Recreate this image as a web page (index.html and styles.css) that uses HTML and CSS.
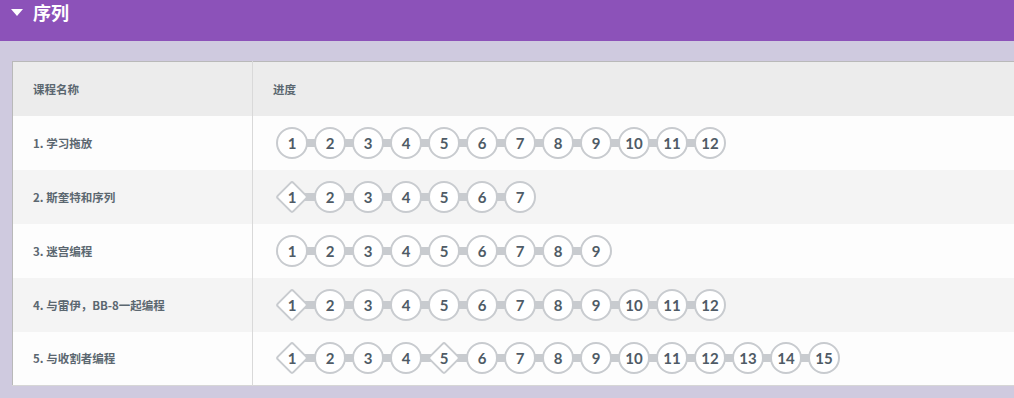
FILE: index.html
```html
<!DOCTYPE html>
<html lang="zh">
<head>
  <meta charset="UTF-8">
  <title>序列</title>
  <link rel="stylesheet" href="styles.css">
</head>
<body>
  <div class="header">
    <span class="caret"></span>
    <h1>序列</h1>
  </div>

  <div class="content">
    <table class="progress">
      <thead>
        <tr>
          <th class="name">课程名称</th>
          <th>进度</th>
        </tr>
      </thead>
      <tbody>
        <tr>
          <td class="name">1. 学习拖放</td>
          <td>
            <div class="steps">
              <span class="step">1</span><span class="step">2</span><span class="step">3</span><span class="step">4</span><span class="step">5</span><span class="step">6</span><span class="step">7</span><span class="step">8</span><span class="step">9</span><span class="step">10</span><span class="step">11</span><span class="step">12</span>
            </div>
          </td>
        </tr>
        <tr>
          <td class="name">2. 斯奎特和序列</td>
          <td>
            <div class="steps">
              <span class="step diamond">1</span><span class="step">2</span><span class="step">3</span><span class="step">4</span><span class="step">5</span><span class="step">6</span><span class="step">7</span>
            </div>
          </td>
        </tr>
        <tr>
          <td class="name">3. 迷宫编程</td>
          <td>
            <div class="steps">
              <span class="step">1</span><span class="step">2</span><span class="step">3</span><span class="step">4</span><span class="step">5</span><span class="step">6</span><span class="step">7</span><span class="step">8</span><span class="step">9</span>
            </div>
          </td>
        </tr>
        <tr>
          <td class="name">4. 与雷伊，BB-8一起编程</td>
          <td>
            <div class="steps">
              <span class="step diamond">1</span><span class="step">2</span><span class="step">3</span><span class="step">4</span><span class="step">5</span><span class="step">6</span><span class="step">7</span><span class="step">8</span><span class="step">9</span><span class="step">10</span><span class="step">11</span><span class="step">12</span>
            </div>
          </td>
        </tr>
        <tr>
          <td class="name">5. 与收割者编程</td>
          <td>
            <div class="steps">
              <span class="step diamond">1</span><span class="step">2</span><span class="step">3</span><span class="step">4</span><span class="step diamond">5</span><span class="step">6</span><span class="step">7</span><span class="step">8</span><span class="step">9</span><span class="step">10</span><span class="step">11</span><span class="step">12</span><span class="step">13</span><span class="step">14</span><span class="step">15</span>
            </div>
          </td>
        </tr>
      </tbody>
    </table>
  </div>
</body>
</html>
```

FILE: styles.css
```css
body {
  margin: 0;
  background: #cfcadf;
  font-family: 'Lato', 'Noto Sans CJK SC', sans-serif;
  overflow: hidden;
}

.header {
  height: 41px;
  background: #8c52b9;
  display: flex;
  align-items: flex-start;
  padding-left: 11px;
}

.caret {
  width: 0;
  height: 0;
  margin-top: 9px;
  border-left: 6px solid transparent;
  border-right: 6px solid transparent;
  border-top: 7px solid #fff;
}

.header h1 {
  margin: 0 0 0 10px;
  color: #fff;
  font-family: 'Noto Sans CJK SC', sans-serif;
  font-size: 18px;
  font-weight: 700;
  line-height: 24px;
}

.content {
  padding: 20px 0 0 12px;
}

.progress {
  width: 1010px;
  border-collapse: collapse;
  border-top: 1px solid #b9b9b9;
  border-left: 1px solid #b9b9b9;
  border-bottom: 1px solid #d6d6d6;
  font-family: 'Noto Sans CJK SC', sans-serif;
  font-size: 11.5px;
  font-weight: 700;
  color: #5b6770;
}

.progress th,
.progress td {
  height: 54px;
  padding: 0 0 0 20px;
  text-align: left;
  vertical-align: middle;
  box-sizing: border-box;
}

.progress th {
  background: #ececec;
  font-weight: 700;
}

.progress .name {
  width: 240px;
  border-right: 1px solid #d9d9d9;
}

.progress tbody tr:nth-child(odd) {
  background: #fdfdfd;
}

.progress tbody tr:nth-child(even) {
  background: #f4f4f4;
}

.steps {
  display: inline-flex;
  gap: 6px;
  margin-left: 3px;
  /* connector line runs between first and last bubble centres */
  background: linear-gradient(#c8cbcf, #c8cbcf) center / calc(100% - 32px) 8px no-repeat;
}

.step {
  position: relative;
  z-index: 0;
  width: 32px;
  height: 32px;
  box-sizing: border-box;
  border: 2px solid #c8cbcf;
  border-radius: 50%;
  background: #fff;
  display: flex;
  align-items: center;
  justify-content: center;
  font-family: 'Lato', sans-serif;
  font-size: 15px;
  font-weight: 700;
  color: #4f5b66;
}

.step.diamond {
  border: none;
  border-radius: 0;
  background: transparent;
}

.step.diamond::before {
  content: '';
  position: absolute;
  z-index: -1;
  left: 4px;
  top: 4px;
  width: 24px;
  height: 24px;
  box-sizing: border-box;
  border: 2px solid #c8cbcf;
  border-radius: 3px;
  background: #fff;
  transform: rotate(45deg);
}
```
